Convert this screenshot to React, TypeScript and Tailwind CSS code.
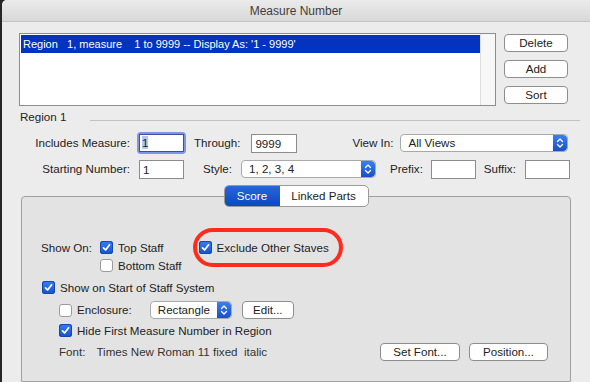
import React from 'react';

const font = { fontFamily: '"Liberation Sans", Arial, sans-serif' };

const Check: React.FC<{ on?: boolean }> = ({ on }) =>
  on ? (
    <span className="flex items-center justify-center w-[13px] h-[13px] rounded-[3px] bg-gradient-to-b from-[#3a7ef2] to-[#1551c9] shadow-[inset_0_0_0_1px_#1447b0]">
      <svg width="9" height="9" viewBox="0 0 9 9">
        <path d="M1.5 4.8 L3.6 7 L7.6 1.8" fill="none" stroke="white" strokeWidth="1.7" strokeLinecap="round" strokeLinejoin="round" />
      </svg>
    </span>
  ) : (
    <span className="block w-[13px] h-[13px] rounded-[3px] bg-white border border-[#9b9b9b]" />
  );

const Arrows: React.FC = () => (
  <span className="flex items-center justify-center w-[14px] h-full rounded-r-[4px] bg-gradient-to-b from-[#3c7ff2] to-[#1650c6]">
    <svg width="8" height="12" viewBox="0 0 8 12">
      <path d="M1.5 4.5 L4 2 L6.5 4.5 M1.5 7.5 L4 10 L6.5 7.5" fill="none" stroke="white" strokeWidth="1.3" strokeLinecap="round" strokeLinejoin="round" />
    </svg>
  </span>
);

const Select: React.FC<{ label: string; w: string }> = ({ label, w }) => (
  <div className={`flex items-stretch h-[18px] ${w} bg-white border border-[#a9a9a9] rounded-[4px] overflow-hidden`}>
    <span className="flex-1 pl-[7px] leading-[16px] text-[#222]">{label}</span>
    <Arrows />
  </div>
);

const Button: React.FC<{ label: string; w: string }> = ({ label, w }) => (
  <div className={`flex items-center justify-center h-[18px] ${w} bg-white border border-[#8e8e8e] rounded-[4px] text-[#222]`}>
    {label}
  </div>
);

const Input: React.FC<{ value?: string; w: string }> = ({ value, w }) => (
  <div className={`h-[19px] ${w} bg-white border border-[#8c8c8c] pl-[3px] leading-[17px] text-[#222]`}>{value}</div>
);

export default function App() {
  return (
    <div className="w-[590px] h-[382px] bg-[#262626] overflow-hidden text-[11.6px]" style={font}>
      <div className="ml-[2px] h-full bg-[#ececec] rounded-tl-[5px] flex flex-col">
        {/* title bar */}
        <div className="h-[22px] flex items-center justify-center bg-gradient-to-b from-[#ebebeb] to-[#d8d8d8] border-b border-[#c4c4c4] rounded-tl-[5px] text-[#3d3d3d] text-[12px]">
          Measure Number
        </div>

        {/* region list + buttons */}
        <div className="flex mt-[11px] ml-[17px]">
          <div className="w-[477px] h-[73px] bg-white border border-[#8d8d8d] flex">
            <div className="flex-1">
              <div className="h-[18px] mt-[1px] ml-[1px] bg-[#0433c0] text-white text-[11px] leading-[18px] pl-[2px] whitespace-pre">
                {"Region   1, measure    1 to 9999 -- Display As: '1 - 9999'"}
              </div>
            </div>
            <div className="w-[15px] bg-[#f7f7f7] border-l border-[#dedede]" />
          </div>
          <div className="flex flex-col gap-[8px] ml-[8px] mt-[1px]">
            <Button label="Delete" w="w-[64px]" />
            <Button label="Add" w="w-[64px]" />
            <Button label="Sort" w="w-[64px]" />
          </div>
        </div>

        {/* Region 1 separator */}
        <div className="flex items-center mt-[3px] ml-[18px] mr-[10px] h-[16px]">
          <span className="text-[#222]">Region 1</span>
          <div className="flex-1 ml-[24px] mt-[6px] h-px bg-[#c2c2c2]" />
        </div>

        {/* row 1 */}
        <div className="flex items-center mt-[7px] h-[22px]">
          <span className="w-[128px] text-right text-[#222]">Includes Measure:</span>
          <div className="ml-[7px] p-[2px] rounded-[4px] bg-[#7f95e8]">
            <div className="h-[18px] w-[45px] bg-white border border-[#3b4fa3] pl-[2px] leading-[16px] text-[#222]">
              <span className="bg-[#b4c6f5]">1</span>
            </div>
          </div>
          <span className="ml-[8px] text-[#222]">Through:</span>
          <div className="ml-[11px]">
            <Input value="9999" w="w-[46px]" />
          </div>
          <span className="ml-[55px] text-[#222]">View In:</span>
          <div className="ml-[7px]">
            <Select label="All Views" w="w-[168px]" />
          </div>
        </div>

        {/* row 2 */}
        <div className="flex items-center mt-[5px] h-[20px]">
          <span className="w-[128px] text-right text-[#222]">Starting Number:</span>
          <div className="ml-[9px]">
            <Input value="1" w="w-[45px]" />
          </div>
          <span className="ml-[19px] text-[#222]">Style:</span>
          <div className="ml-[9px]">
            <Select label="1, 2, 3, 4" w="w-[135px]" />
          </div>
          <span className="ml-[14px] text-[#222]">Prefix:</span>
          <div className="ml-[8px]">
            <Input w="w-[45px]" />
          </div>
          <span className="ml-[8px] text-[#222]">Suffix:</span>
          <div className="ml-[9px]">
            <Input w="w-[45px]" />
          </div>
        </div>

        {/* tab group */}
        <div className="flex flex-col ml-[19px] w-[550px] mt-[6px] flex-1">
          <div className="flex justify-center relative z-10 -mb-[11px]">
            <div className="flex h-[22px] rounded-[5px] overflow-hidden border border-[#9a9a9a] bg-white">
              <div className="w-[55px] flex items-center justify-center bg-gradient-to-b from-[#2566dc] to-[#0c48be] text-white">Score</div>
              <div className="w-[88px] flex items-center justify-center text-[#222]">Linked Parts</div>
            </div>
          </div>
          <div className="flex-1 bg-[#e3e3e3] border border-[#a0a0a0] rounded-t-[4px] relative">
            {/* Show On */}
            <div className="flex mt-[44px] ml-[19px]">
              <span className="w-[59px] leading-[13px] text-[#222]">Show On:</span>
              <div className="flex flex-col gap-[5px]">
                <div className="flex items-center h-[13px]">
                  <Check on />
                  <span className="ml-[5px] text-[#222]">Top Staff</span>
                  <div className="ml-[35px] flex items-center">
                    <Check on />
                    <span className="ml-[5px] text-[#222]">Exclude Other Staves</span>
                  </div>
                </div>
                <div className="flex items-center h-[13px]">
                  <Check />
                  <span className="ml-[5px] text-[#222]">Bottom Staff</span>
                </div>
              </div>
            </div>

            {/* show on start */}
            <div className="flex items-center mt-[9px] ml-[20px] h-[13px]">
              <Check on />
              <span className="ml-[5px] text-[#222]">Show on Start of Staff System</span>
            </div>
            <div className="flex items-center mt-[7px] ml-[37px] h-[18px]">
              <Check />
              <span className="ml-[5px] text-[#222]">Enclosure:</span>
              <div className="ml-[18px]">
                <Select label="Rectangle" w="w-[82px]" />
              </div>
              <div className="ml-[10px]">
                <Button label="Edit..." w="w-[52px]" />
              </div>
            </div>
            <div className="flex items-center mt-[5px] ml-[37px] h-[13px]">
              <Check on />
              <span className="ml-[5px] text-[#222]">Hide First Measure Number in Region</span>
            </div>
            <div className="flex items-center mt-[6px] ml-[37px] h-[18px]">
              <span className="text-[#333]">Font:</span>
              <span className="ml-[11px] text-[#333] whitespace-pre">{'Times New Roman 11 fixed  italic'}</span>
              <div className="ml-auto mr-[22px] flex gap-[9px]">
                <Button label="Set Font..." w="w-[80px]" />
                <Button label="Position..." w="w-[79px]" />
              </div>
            </div>

            {/* red annotation */}
            <div className="absolute left-[171px] top-[31px] w-[150px] h-[39px] rounded-[20px] border-[4px] border-[#ff2b1c]" />
          </div>
        </div>
      </div>
    </div>
  );
}
